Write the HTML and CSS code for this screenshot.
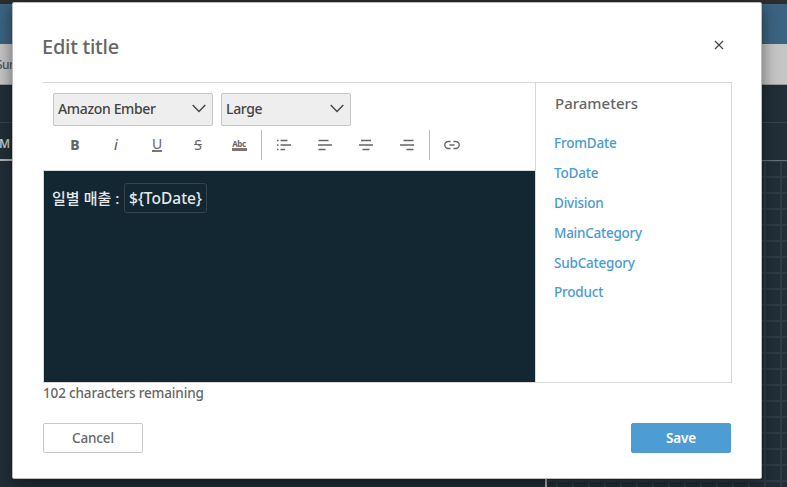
FILE: index.html
```html
<!DOCTYPE html>
<html lang="ko">
<head>
<meta charset="utf-8">
<title>Edit title</title>
<link rel="stylesheet" href="styles.css">
</head>
<body>
<div class="page">
  <div class="strip"></div>
  <div class="topbar"></div>
  <div class="subbar"><span>Sur</span></div>
  <div class="band"></div>
  <div class="tabs"><span class="tab">M</span><span class="tabline"></span></div>
  <div class="sheet"><div class="side"></div><div class="canvas"></div></div>
</div>
<section class="dialog" role="dialog">
  <header class="head">
    <h1>Edit title</h1>
    <svg class="close" width="10" height="10" viewBox="0 0 10 10"><path d="M1 1l8 8M9 1l-8 8"/></svg>
  </header>
  <div class="body">
    <div class="editor">
      <div class="selects">
        <div class="select font"><span>Amazon Ember</span><svg width="14" height="9" viewBox="0 0 14 9"><path d="M.7 1l6.3 6.5L13.3 1"/></svg></div>
        <div class="select size"><span>Large</span><svg width="14" height="9" viewBox="0 0 14 9"><path d="M.7 1l6.3 6.5L13.3 1"/></svg></div>
      </div>
      <div class="tools">
        <div class="tool bold">B</div>
        <div class="tool italic">i</div>
        <div class="tool"><span class="under">U</span></div>
        <div class="tool"><span class="strike">S</span></div>
        <div class="tool"><span class="abc">Abc</span></div>
        <i class="sep"></i>
        <div class="tool list"><svg width="16" height="12" viewBox="0 0 16 12"><path d="M1 1.500h1.500M4.500 1.500h7M1 6h1.500M4.500 6h10.500M1 10.500h1.500M4.500 10.500h4.500"/></svg></div>
        <div class="tool"><svg width="16" height="12" viewBox="0 0 16 12"><path d="M1.500 1.500h10M1 6h14M1.500 10.500h7"/></svg></div>
        <div class="tool"><svg width="16" height="12" viewBox="0 0 16 12"><path d="M3 1.500h10M1 6h14M4.500 10.500h7"/></svg></div>
        <div class="tool"><svg width="16" height="12" viewBox="0 0 16 12"><path d="M4.500 1.500h10M1 6h14M7.500 10.500h7"/></svg></div>
        <i class="sep last"></i>
        <div class="tool link"><svg width="16" height="10" viewBox="0 0 16 10"><path d="M6.500 1.500H4.300a3.500 3.500 0 0 0 0 7h2.200M9.500 1.500h2.200a3.500 3.500 0 0 1 0 7H9.500M5.500 5h5"/></svg></div>
      </div>
      <div class="text"><span class="ko">일별 매출 :</span><span class="param">${ToDate}</span></div>
    </div>
    <aside class="params">
      <h2>Parameters</h2>
      <a>FromDate</a><a>ToDate</a><a>Division</a><a class="main">MainCategory</a><a>SubCategory</a><a>Product</a>
    </aside>
  </div>
  <p class="remain">102 characters remaining</p>
  <footer class="foot"><button class="cancel">Cancel</button><button class="save">Save</button></footer>
</section>
</body>
</html>
```
FILE: styles.css
```css
* { box-sizing: border-box; }
body { margin: 0; width: 787px; height: 487px; overflow: hidden; position: relative; font: 500 14px/20px "Noto Sans", "Noto Sans CJK KR", sans-serif; color: #666; }
.page { height: 487px; display: flex; flex-direction: column; background: #222f38; }
.strip { height: 4px; background: #2d2d2d; }
.topbar { height: 40px; background: #3b6481; }
.subbar { height: 41px; background: #c5c5c5; border-bottom: 1px solid #999; padding-top: 11px; font-size: 12px; letter-spacing: -.5px; color: #555; }
.subbar span { margin-left: -4px; }
.band { height: 38px; border-bottom: 1px solid #39454e; }
.tabs { height: 38px; display: flex; flex-direction: column; justify-content: flex-end; border-bottom: 1px solid #65707a; }
.tab { font-size: 12px; color: #c5c9cc; font-weight: 600; margin-bottom: 5px; margin-left: -1px; }
.tabline { width: 547px; height: 2px; background: #b0b5b8; margin-bottom: -1px; }
.sheet { flex: 1; display: flex; }
.side { width: 547px; border-right: 2px solid #aeb3b6; }
.canvas { flex: 1; background-image: linear-gradient(90deg, #2f3c45 2px, transparent 2px), linear-gradient(#2f3c45 2px, transparent 2px); background-size: 16px 16px; background-position: 9px 0, 0 15px; }
.dialog { position: absolute; left: 12px; top: 2px; width: 750px; height: 477px; background: #fff; border: 1px solid #bbb; border-radius: 2px; box-shadow: 0 4px 16px rgba(0,0,0,.5); padding: 0 30px; }
.head { height: 79px; display: flex; justify-content: space-between; align-items: flex-start; padding: 30px 7px 0 0; }
h1 { margin: 0 0 0 -1px; font-size: 20px; line-height: 28px; font-weight: 500; letter-spacing: -.25px; color: #666; }
svg { fill: none; stroke: #666; stroke-width: 1.4; display: block; }
.close { margin-top: 7px; stroke: #444; stroke-width: 1.2; }
.body { width: 689px; height: 301px; display: flex; border: 1px solid #d8d8d8; border-left: 0; }
.editor { width: 492px; display: flex; flex-direction: column; }
.selects { display: flex; gap: 8px; padding: 10px 0 0 10px; }
.select { height: 33px; display: flex; align-items: center; justify-content: space-between; padding: 0 6px 2px 4px; background: #eee; border: 1px solid #c6c6c6; border-radius: 2px; color: #444; letter-spacing: -.35px; }
.select svg { stroke: #444; }
.font { width: 160px; }
.size { width: 130px; }
.tools { height: 44px; display: flex; align-items: center; padding: 0 0 6px 11px; }
.tool { width: 41px; height: 24px; display: flex; align-items: center; justify-content: center; font-size: 14px; }
.bold { font-weight: 800; padding-left: 1px; }
.italic { font-style: italic; padding-left: 1px; }
.under { line-height: 12px; height: 14px; border-bottom: 2px solid #777; font-weight: 400; margin-left: 1px; }
.strike { text-decoration: line-through; font-weight: 400; padding-left: 1px; }
.abc { font-size: 8px; line-height: 8px; font-weight: 700; width: 15px; text-align: center; border-bottom: 3px solid #777; letter-spacing: -.4px; margin-left: 1px; }
.sep { width: 1px; height: 30px; background: #b8b8b8; margin-left: 2px; }
.list { margin-left: 1px; }
.last { margin-left: 2px; }
.link { margin-left: 1px; }
.text { flex: 1; background: #132733; border-top: 1px solid #d8d8d8; border-left: 1px solid #d8d8d8; color: #e6e9ea; padding: 12px 0 0 8px; display: flex; align-items: flex-start; font-size: 15px; line-height: 30px; }
.ko { width: 72px; white-space: nowrap; letter-spacing: .05px; }
.param { width: 83px; height: 30px; line-height: 28px; border: 1px solid #34434e; border-radius: 3px; text-align: center; font-size: 15.5px; }
.params { flex: 1; border-left: 1px solid #d8d8d8; padding: 10px 0 0 18px; display: flex; flex-direction: column; }
h2 { margin: 0 0 15px 1px; font-size: 15px; line-height: 20px; font-weight: 500; }
.params a { color: #4a9ad2; height: 30px; line-height: 30px; font-size: 13.5px; letter-spacing: -.2px; }
.params .main { letter-spacing: -.25px; }
.params a:last-child { margin-top: -1px; }
.remain { margin: 0; padding-bottom: 1px; font-size: 13.5px; line-height: 20px; letter-spacing: -.15px; }
.foot { display: flex; justify-content: space-between; padding-right: 0; margin-top: 19px; width: 688px; }
button { width: 100px; height: 30px; padding: 0; font: inherit; font-size: 13.5px; letter-spacing: -.15px; border: 1px solid #c8c8c8; border-radius: 2px; background: #fff; color: #666; }
.save { background: #4d9cd4; border-color: #4d9cd4; color: #fff; font-weight: 600; }
```
